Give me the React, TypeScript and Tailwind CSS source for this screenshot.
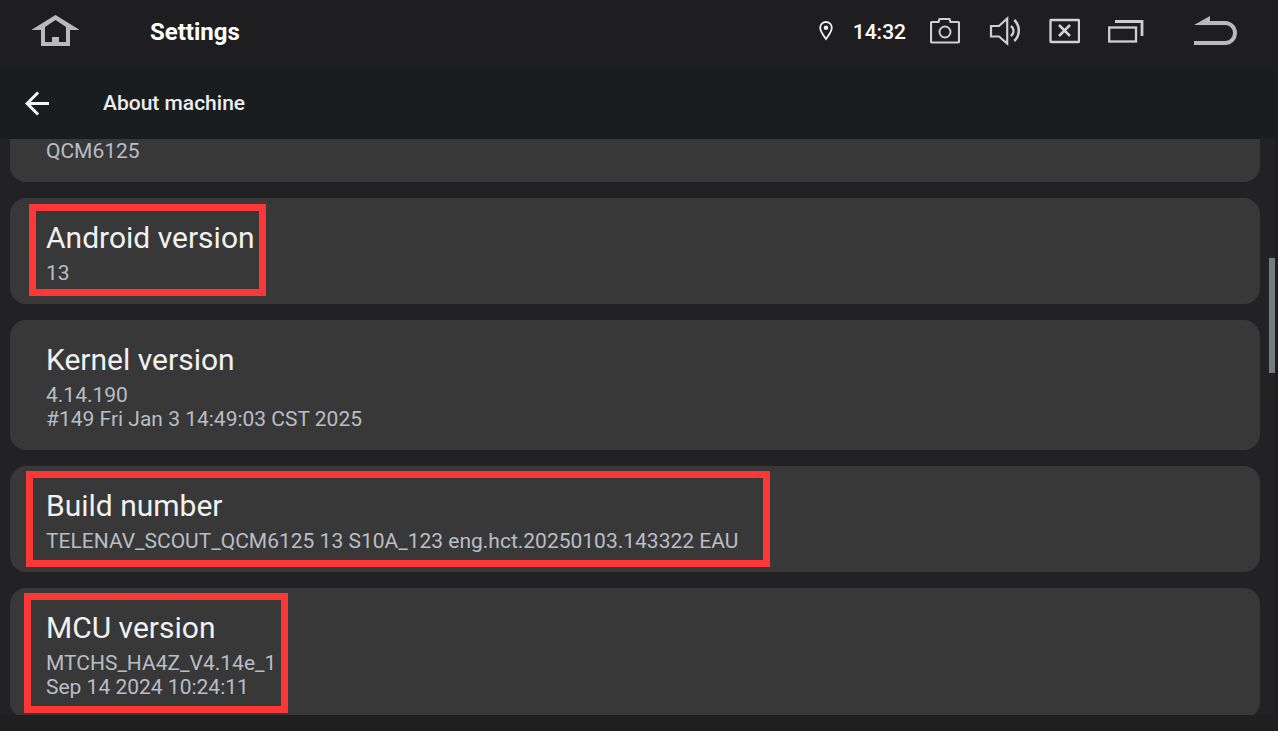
import type { ReactNode } from "react";
import clsx from "clsx";

type InfoItem = {
	title: string;
	lines: string[];
	mark?: string;
};

const items: InfoItem[] = [
	{
		title: "Android version",
		lines: ["13"],
		mark: "left-[19px] top-[6px] w-[237px] h-[92px]",
	},
	{
		title: "Kernel version",
		lines: ["4.14.190", "#149 Fri Jan 3 14:49:03 CST 2025"],
	},
	{
		title: "Build number",
		lines: ["TELENAV_SCOUT_QCM6125 13 S10A_123 eng.hct.20250103.143322 EAU"],
		mark: "left-[16px] top-[5px] w-[744px] h-[96px]",
	},
	{
		title: "MCU version",
		lines: ["MTCHS_HA4Z_V4.14e_1", "Sep 14 2024 10:24:11"],
		mark: "left-[14px] top-[5px] w-[264px] h-[120px]",
	},
];

function IconButton({ label, className, children }: { label: string; className?: string; children: ReactNode }) {
	return (
		<button type="button" aria-label={label} className={clsx("shrink-0", className)}>
			{children}
		</button>
	);
}

function HomeIcon() {
	return (
		<svg width="48" height="34" viewBox="0 0 48 34" fill="#b9b9b9">
			<path fillRule="evenodd" d="M23.5 0L47 14.5V15H38V31H9V15H0V14.5ZM23.5 5L13 12V27H20V22H27V27H34V12Z" />
		</svg>
	);
}

function PinIcon() {
	return (
		<svg width="14" height="34" viewBox="0 0 14 34">
			<path d="M7 24C4.5 20.5 1.2 16.5 1.2 12.8a5.800 5.800 0 0 1 11.600 0C12.800 16.500 9.500 20.500 7 24Z" fill="none" stroke="#f2f2f2" strokeWidth="1.800" />
			<circle cx="7" cy="12.800" r="2.300" fill="#f2f2f2" />
		</svg>
	);
}

function CameraIcon() {
	return (
		<svg width="30" height="34" viewBox="0 0 30 34" fill="none" stroke="#cfcfcf" strokeWidth="2.200">
			<path d="M2 7H8.500L9.500 4H19.500L20.500 7H28Q29 7 29 8V26.500Q29 27.500 28 27.500H2Q1 27.500 1 26.500V8Q1 7 2 7Z" />
			<circle cx="15" cy="17" r="5.500" strokeWidth="1.900" />
		</svg>
	);
}

function VolumeIcon() {
	return (
		<svg width="32" height="34" viewBox="0 0 32 34" fill="none" stroke="#cfcfcf" strokeWidth="2.200">
			<path d="M3 11H11L19.200 3.500V28.500L11 21.500H3Z" />
			<path d="M22.800 11A6 6 0 0 1 22.800 21" />
			<path d="M26.300 5A14.500 14.500 0 0 1 26.300 26" strokeWidth="2.500" />
		</svg>
	);
}

function CloseIcon() {
	return (
		<svg width="32" height="34" viewBox="0 0 32 34" fill="none" stroke="#d2d2d2" strokeWidth="2.300">
			<rect x="2.500" y="5" width="28.500" height="22" rx="0.500" />
			<path d="M11 10L22 21M22 10L11 21" strokeWidth="2.500" />
		</svg>
	);
}

function RecentsIcon() {
	return (
		<svg width="36" height="34" viewBox="0 0 36 34" fill="none" stroke="#cfcfcf" strokeWidth="2.300">
			<rect x="1.200" y="12.500" width="26.800" height="14" />
			<path d="M7 6.500H34V21" strokeWidth="2.800" />
		</svg>
	);
}

function ReturnIcon() {
	return (
		<svg width="44" height="34" viewBox="0 0 44 34" fill="#b9b9b9">
			<path d="M0 10L16 1V6H31A12 12 0 0 1 31 30H0V26H31A8 8 0 0 0 31 10Z" />
		</svg>
	);
}

function BackArrowIcon() {
	return (
		<svg width="36" height="35" viewBox="0 0.500 24 23" fill="#f4f4f4">
			<path d="M20 11H7.830l5.590-5.590L12 4l-8 8 8 8 1.410-1.410L7.830 13H20v-2z" />
		</svg>
	);
}

function InfoCard({ title, lines, mark }: InfoItem) {
	return (
		<section className="relative shrink-0 rounded-2xl bg-[#383838] px-9 pb-[19px] pt-5">
			<h2 className="text-[30px] leading-10 text-[#f1f1f1]">{title}</h2>
			<div className="mt-[3px] text-[21px] leading-6 text-[#b9bec6]">
				{lines.map((line) => (
					<p key={line}>{line}</p>
				))}
			</div>
			{mark && <div className={clsx("pointer-events-none absolute border-[7px] border-[#fb3836]", mark)} />}
		</section>
	);
}

export default function App() {
	return (
		<div className="flex h-screen flex-col overflow-hidden bg-[#1f1f1f] font-['Roboto',sans-serif]">
			{/* status bar */}
			<header className="flex h-[68px] shrink-0 items-center bg-[#1e1e20] pb-1 pl-8 pr-10">
				<IconButton label="Home">
					<HomeIcon />
				</IconButton>
				<h1 className="ml-[70px] text-2xl font-bold text-white">Settings</h1>
				<div className="ml-auto flex items-center">
					<PinIcon />
					<time className="ml-5 mr-6 text-[21px] font-medium leading-8 text-white">14:32</time>
					<div className="flex items-center gap-7">
						<IconButton label="Screenshot">
							<CameraIcon />
						</IconButton>
						<IconButton label="Volume">
							<VolumeIcon />
						</IconButton>
						<IconButton label="Close">
							<CloseIcon />
						</IconButton>
						<IconButton label="Recent apps">
							<RecentsIcon />
						</IconButton>
					</div>
					<IconButton label="Return" className="ml-[50px]">
						<ReturnIcon />
					</IconButton>
				</div>
			</header>

			{/* page toolbar */}
			<div className="flex h-[71px] shrink-0 items-center bg-[#191d1f] pl-[19px]">
				<IconButton label="Back">
					<BackArrowIcon />
				</IconButton>
				<h2 className="ml-12 text-[21px] font-medium leading-[33px] text-[#ededed]">About machine</h2>
			</div>

			{/* scrolled list */}
			<main className="relative flex min-h-0 flex-1 flex-col gap-4 overflow-hidden border-r-[3px] border-[#1e1e1e] bg-[#222224] pl-2.5 pr-[15px]">
				<section className="shrink-0 rounded-b-2xl bg-[#383838] px-9 pb-[19px]">
					<p className="text-[21px] leading-6 text-[#b9bec6]">QCM6125</p>
				</section>
				{items.map((item) => (
					<InfoCard key={item.title} {...item} />
				))}
				<div className="absolute right-0 top-[119px] h-[115px] w-1.5 bg-[#777b82]" />
			</main>

			<footer className="h-4 shrink-0" />
		</div>
	);
}
